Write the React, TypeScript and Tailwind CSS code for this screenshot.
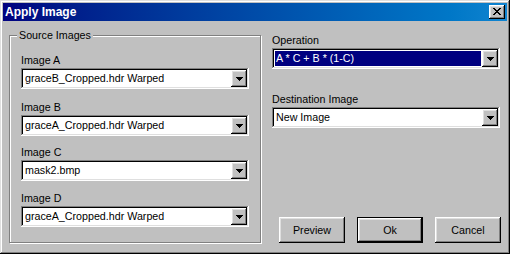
import React from "react";

const raised =
  "shadow-[inset_-1px_-1px_0_#000,inset_1px_1px_0_#fff,inset_-2px_-2px_0_#808080,inset_2px_2px_0_#dfdfdf]";
const sunken =
  "shadow-[inset_-1px_-1px_0_#fff,inset_1px_1px_0_#808080,inset_-2px_-2px_0_#dfdfdf,inset_2px_2px_0_#000]";

function Arrow() {
  return (
    <svg width="7" height="4" viewBox="0 0 7 4" className="block">
      <path d="M0 0h7v1h-1v1h-1v1h-1v1h-1v-1h-1v-1h-1v-1h-1z" fill="#000" />
    </svg>
  );
}

function Combo({ value, selected = false }: { value: string; selected?: boolean }) {
  return (
    <div className={`relative h-[21px] w-[228px] bg-white ${sunken}`}>
      <div
        className={`absolute left-[3px] top-[3px] bottom-[3px] right-[19px] flex items-center pl-[1px] ${
          selected ? "bg-[#000080] text-white" : "text-black"
        }`}
      >
        <span className="leading-[13px] whitespace-nowrap">{value}</span>
      </div>
      <div
        className={`absolute right-[2px] top-[2px] w-[16px] h-[17px] bg-[#c0c0c0] flex items-center justify-center ${raised}`}
      >
        <Arrow />
      </div>
    </div>
  );
}

function Field({ label, value, selected, className = "" }: { label: string; value: string; selected?: boolean; className?: string }) {
  return (
    <div className={`flex flex-col ${className}`}>
      <div className="h-[14px] leading-[13px] whitespace-nowrap">{label}</div>
      <Combo value={value} selected={selected} />
    </div>
  );
}

function Button({ label, isDefault = false }: { label: string; isDefault?: boolean }) {
  if (isDefault) {
    return (
      <div className="w-[66px] h-[26px] border border-black">
        <div className={`w-full h-full flex items-center justify-center ${raised}`}>
          <span className="leading-[13px]">{label}</span>
        </div>
      </div>
    );
  }
  return (
    <div className={`w-[66px] h-[26px] flex items-center justify-center ${raised}`}>
      <span className="leading-[13px]">{label}</span>
    </div>
  );
}

export default function App() {
  return (
    <div
      className="w-[510px] h-[254px] bg-[#c0c0c0] p-[3px] flex flex-col text-[10.7px] text-black font-['Liberation_Sans',Arial,sans-serif] shadow-[inset_-1px_-1px_0_#000,inset_1px_1px_0_#dfdfdf,inset_-2px_-2px_0_#808080,inset_2px_2px_0_#fff]"
    >
      <div className="h-[18px] flex items-center justify-between pl-[2px] pr-[2px] bg-linear-to-r from-[#000080] to-[#1084d0]">
        <span className="text-white font-bold text-[12px] leading-[14px]">Apply Image</span>
        <div className={`w-[16px] h-[14px] bg-[#c0c0c0] flex items-center justify-center ${raised}`}>
          <svg width="8" height="7" viewBox="0 0 8 7" className="block -mt-[1px]">
            <path
              d="M0 0h2v1h1v1h2v-1h1v-1h2v1h-1v1h-1v1h-1v1h1v1h1v1h1v1h-2v-1h-1v-1h-2v1h-1v1h-2v-1h1v-1h1v-1h1v-1h-1v-1h-1v-1h-1z"
              fill="#000"
            />
          </svg>
        </div>
      </div>

      <div className="flex flex-row">
        <div className="relative ml-[6px] mt-[14px] w-[252px] h-[208px] border border-[#808080] shadow-[inset_1px_1px_0_#fff,1px_1px_0_#fff] pl-[11px] pt-[18px]">
          <div className="absolute left-[7px] -top-[7px] px-[2px] bg-[#c0c0c0] leading-[13px] whitespace-nowrap">
            Source Images
          </div>
          <Field label="Image A" value="graceB_Cropped.hdr Warped" />
          <Field className="mt-[12px]" label="Image B" value="graceA_Cropped.hdr Warped" />
          <Field className="mt-[10px]" label="Image C" value="mask2.bmp" />
          <Field className="mt-[11px]" label="Image D" value="graceA_Cropped.hdr Warped" />
        </div>

        <div className="ml-[11px] flex flex-col pt-[13px]">
          <Field label="Operation" value="A * C + B * (1-C)" selected />
          <Field className="mt-[24px]" label="Destination Image" value="New Image" />
          <div className="mt-[89px] pl-[7px] flex flex-row gap-[12px]">
            <Button label="Preview" />
            <Button label="Ok" isDefault />
            <Button label="Cancel" />
          </div>
        </div>
      </div>
    </div>
  );
}
